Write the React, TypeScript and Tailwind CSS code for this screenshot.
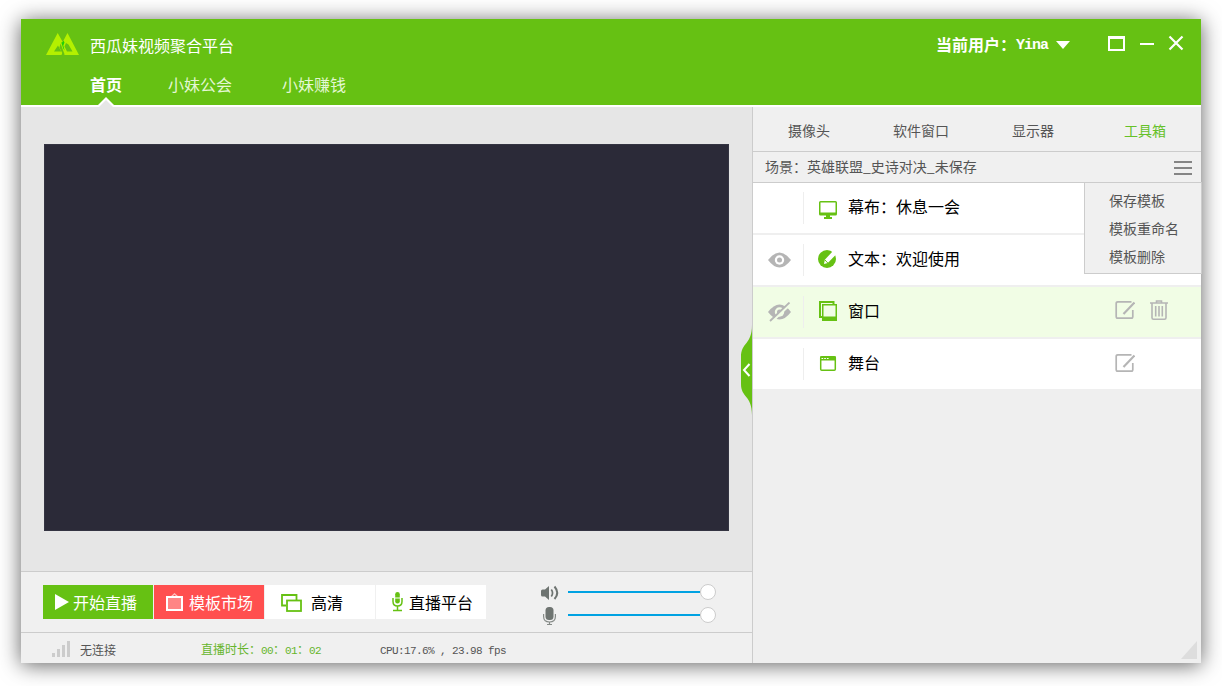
import type { ReactNode } from "react";

function Latin({ children }: { children: ReactNode }) {
  return <span className="font-['Liberation_Mono',monospace] text-[11px] tracking-[-0.6px]">{children}</span>;
}

function Logo() {
  return (
    <svg className="ml-[25px] h-[22px] w-[33px]" viewBox="0 0 33 22">
      <path d="M0 22L11.700 0L16.700 9L21.500 0L33 22H18.500L16.700 19L15.500 22ZM12 12.500L8 18.500H15.300ZM20 10L18.500 13.500L21 18.500H26.500L22.500 11.500Z" fill="#b4f000" fillRule="evenodd" />
      <path d="M14.600 10.500L18.600 21.500H17L13.500 14.500Z" fill="#66c113" />
      <path d="M15.300 9.500L16.700 9L17.500 7.500L18.500 9.500L17.300 12.500L18.600 17.500L17.300 15.500Z" fill="#1fcf0a" />
    </svg>
  );
}

function EditIcon() {
  return (
    <svg className="h-5 w-5" viewBox="0 0 20 20" fill="none" stroke="#b5b5b5">
      <path d="M16.500 1.800H2.800Q1.200 1.800 1.200 3.400V16.500Q1.200 18.200 2.800 18.200H16.200Q17.800 18.200 17.800 16.500V10" strokeWidth="1.700" />
      <path d="M8.500 14L19.500 2.500" strokeWidth="2.200" />
    </svg>
  );
}

function TrashIcon() {
  return (
    <svg className="h-[21px] w-5" viewBox="0 0 20 21" fill="none" stroke="#b5b5b5" strokeWidth="1.600">
      <path d="M0 3H18M6.500 3V1H11.500V3M2 3.500V17.800Q2 19.300 3.500 19.300H14.500Q16 19.300 16 17.800V3.500M5.700 6V16.500M9 6V16.500M12.300 6V16.500" />
    </svg>
  );
}

function EyeIcon({ hidden }: { hidden?: boolean }) {
  return (
    <svg className="h-5 w-6" viewBox="0 0 24 20">
      <path d="M0 10Q11.500-5 23 10Q11.500 25 0 10Z" fill="#b5b5b5" />
      <circle cx="11.500" cy="10" r="4.700" fill={hidden ? "#f1fde5" : "#fff"} />
      <circle cx="11.500" cy="10" r="2.500" fill="#b5b5b5" />
      {hidden && (
        <>
          <path d="M3.500 20L23.500 1" stroke="#f1fde5" strokeWidth="2.500" />
          <path d="M2 19L21.500 .5" stroke="#b5b5b5" strokeWidth="1.800" />
        </>
      )}
    </svg>
  );
}

function MonitorIcon() {
  return (
    <svg className="h-[22px] w-5" viewBox="0 0 20 22">
      <path d="M2.500 4H17.500Q19 4 19 5.500V17Q19 18.500 17.500 18.500H12V20H14V22H6V20H8V18.500H2.500Q1 18.500 1 17V5.500Q1 4 2.500 4ZM2.500 5.500V15.500H17.500V5.500Z" fill="#66c113" fillRule="evenodd" />
    </svg>
  );
}

function PenIcon() {
  return (
    <svg className="h-[22px] w-5" viewBox="0 0 20 22">
      <circle cx="9" cy="10" r="9" fill="#66c113" />
      <path d="M15 2L18.300 5.300L9.800 14L6 15L6.800 10.800Z" fill="#fff" />
      <path d="M6.800 10.800L9.800 14" stroke="#66c113" strokeWidth="1" />
    </svg>
  );
}

function WindowsIcon() {
  return (
    <svg className="h-[22px] w-5" viewBox="0 0 20 22">
      <path d="M15.500 3V1H2V16H4" fill="none" stroke="#66c113" strokeWidth="2" />
      <path d="M4 3H19V20H4ZM5.500 4.500V15.500H17.500V4.500Z" fill="#66c113" fillRule="evenodd" />
    </svg>
  );
}

function StageIcon() {
  return (
    <svg className="h-[22px] w-5" viewBox="0 0 20 22">
      <rect x="2.700" y="3.700" width="14.600" height="13.500" rx="1" fill="#fff" stroke="#66c113" strokeWidth="1.500" />
      <path d="M2 3.500H18V7.500H2Z" fill="#66c113" />
      <path d="M3.500 5.500H5.200M6.200 5.500H7.900M8.900 5.500H10.600" stroke="#fff" strokeWidth="1" />
    </svg>
  );
}

interface RowProps {
  icon: ReactNode;
  label: string;
  eye?: ReactNode;
  actions?: ReactNode;
  active?: boolean;
}

function SceneRow({ icon, label, eye, actions, active }: RowProps) {
  return (
    <div className={active ? "flex h-[50px] items-center bg-[#f1fde5]" : "flex h-[50px] items-center bg-white"}>
      <div className="flex h-8 w-[51px] items-center border-r border-[#eee] pl-[15px]">{eye}</div>
      <div className="ml-3.5">{icon}</div>
      <div className="ml-2.5 pb-[5px] text-base leading-6 text-black">{label}</div>
      <div className="ml-auto flex w-[86px] gap-[15px] pb-1">{actions}</div>
    </div>
  );
}

function VolumeSlider({ icon }: { icon: ReactNode }) {
  return (
    <div className="flex h-[23px] items-center">
      <div className="flex w-7 justify-start">{icon}</div>
      <div className="h-0.5 w-[132px] bg-[#00a2e2]" />
      <div className="h-4 w-4 rounded-full border border-[#ccc] bg-white" />
    </div>
  );
}

const tabs = ["摄像头", "软件窗口", "显示器", "工具箱"];

export default function App() {
  return (
    <div className="h-[686px] w-[1222px] overflow-hidden bg-white pl-[21px] pt-[19px] font-['Noto_Sans_CJK_SC',sans-serif]">
      <div className="flex h-[644px] w-[1180px] flex-col bg-[#f0f0f0] shadow-[0_2px_20px_rgba(0,0,0,0.62)]">
        <header className="relative h-[88px] border-b-2 border-white bg-[#66c113] text-white">
          <div className="flex h-[50px] items-center">
            <Logo />
            <div className="ml-[11px] pt-px text-base leading-6">西瓜妹视频聚合平台</div>
            <div className="ml-auto flex items-center text-base font-bold leading-6">
              <span className="pb-px">当前用户：</span>
              <span className="mt-[3px] font-['Liberation_Mono',monospace] text-[15px] tracking-[-1px]">Yina</span>
              <svg className="ml-2 mt-px h-2 w-3.5" viewBox="0 0 14 8"><path d="M0 0H14L7 8Z" fill="#fff" /></svg>
            </div>
            <svg className="mb-0.5 ml-[38px] mr-4 h-4 w-[77px]" viewBox="0 0 77 16" fill="none" stroke="#fff">
              <path d="M1 2.500V15H16V2.500" strokeWidth="2" />
              <path d="M0 2.500H17" strokeWidth="3" />
              <path d="M32 9H46" strokeWidth="2" />
              <path d="M61.500 1.500L74.500 14.500M74.500 1.500L61.500 14.500" strokeWidth="2.200" />
            </svg>
          </div>
          <nav className="flex pl-[69px] pt-[3px] text-base leading-6">
            <span className="w-[78px] font-bold">首页</span>
            <span className="w-[114px] text-[#e4f7d3]">小妹公会</span>
            <span className="text-[#e4f7d3]">小妹赚钱</span>
          </nav>
          <svg className="absolute -bottom-0.5 left-[75px] h-2.5 w-5" viewBox="0 0 20 10">
            <path d="M0 10L2 8L10 0L18 8L20 10Z" fill="#fff" />
            <path d="M3 10L10 3L17 10Z" fill="#e6e6e6" />
          </svg>
        </header>

        <div className="flex flex-1">
          <main className="relative flex w-[732px] flex-col border-r border-[#ccc]">
            <div className="h-[465px] border-b border-[#ccc] bg-[#e6e6e6] pl-[23px] pt-[37px]">
              <div className="h-[387px] w-[685px] border border-[#343442] bg-[#2b2a38]" />
            </div>
            <div className="flex h-[61px] border-b border-[#ccc] pl-[22px] pt-[13px]">
              <div className="flex gap-px text-base leading-[34px] text-black">
                <div className="flex h-[34px] w-[110px] items-center bg-[#66c113] pl-3 text-white">
                  <svg className="h-4 w-3.5" viewBox="0 0 14 16"><path d="M0 0L14 8L0 16Z" fill="#fff" /></svg>
                  <span className="ml-1">开始直播</span>
                </div>
                <div className="flex h-[34px] w-[110px] items-center bg-[#ff4f4f] pl-3 text-white">
                  <svg className="h-[18px] w-[17px]" viewBox="0 0 17 18">
                    <path d="M5 4L8.500 .8L12 4" fill="none" stroke="#ffc0c0" strokeWidth="1.200" />
                    <rect x="1" y="4" width="15" height="13" fill="#ff8585" stroke="#fff" strokeWidth="2" />
                  </svg>
                  <span className="ml-1.5">模板市场</span>
                </div>
                <div className="flex h-[34px] w-[110px] items-center bg-white pl-4">
                  <svg className="mt-0.5 h-[18px] w-[21px]" viewBox="0 0 21 18" fill="none" stroke="#66c113" strokeWidth="1.800">
                    <path d="M5 11.500H1V1H15.500V6" />
                    <rect x="6" y="6.500" width="14" height="10.500" />
                  </svg>
                  <span className="ml-[9px]">高清</span>
                </div>
                <div className="flex h-[34px] w-[110px] items-center bg-white pl-4">
                  <svg className="h-5 w-[11px]" viewBox="0 0 11 20" fill="none" stroke="#66c113">
                    <rect x="3.200" y="0" width="4.600" height="11.500" rx="2.300" fill="#66c113" stroke="none" />
                    <path d="M3 6H8" stroke="#fff" strokeWidth="1" />
                    <path d="M1 6V9.500Q1 14 5.500 14Q10 14 10 9.500V6M5.500 14V18M1 18.500H10" strokeWidth="1.500" />
                  </svg>
                  <span className="ml-1.5">直播平台</span>
                </div>
              </div>
              <div className="-mt-[5px] ml-[54px] flex flex-col">
                <VolumeSlider
                  icon={
                    <svg className="ml-px mt-0.5 h-4 w-[18px]" viewBox="0 0 18 16" fill="none" stroke="#6e7471">
                      <path d="M0 6Q0 4.500 1.500 4.500H4L8 1V15L4 11.500H1.500Q0 11.500 0 10Z" fill="#6e7471" stroke="none" />
                      <path d="M10.300 4.500Q12.800 8 10.300 11.500" strokeWidth="1.700" />
                      <path d="M13.500 1.500Q19 8 13.500 14" strokeWidth="2" />
                    </svg>
                  }
                />
                <VolumeSlider
                  icon={
                    <svg className="ml-[3px] mt-1 h-[19px] w-[13px]" viewBox="0 0 13 19" fill="none" stroke="#858a87">
                      <rect x="2.500" y="0" width="8" height="13" rx="3.500" fill="#6e7471" stroke="none" />
                      <path d="M.6 7V9.500Q.6 15 6.500 15Q12.400 15 12.400 9.500V7M6.500 15V17.500M4 17.500H9" strokeWidth="1.200" />
                    </svg>
                  }
                />
              </div>
            </div>
            <footer className="flex h-[30px] items-center pl-[31px] text-xs text-[#555]">
              <svg className="mt-px h-4 w-[18px]" viewBox="0 0 18 16" fill="#ccc">
                <path d="M0 12H3V16H0ZM5 8H8V16H5ZM10 4H13V16H10ZM15 0H18V16H15Z" />
              </svg>
              <span className="ml-2.5 w-[121px] pt-[3px]">无连接</span>
              <span className="w-[179px] pt-[3px] text-[#66b52b]">
                直播时长：<Latin>00</Latin>：<Latin>01</Latin>：<Latin>02</Latin>
              </span>
              <span className="whitespace-nowrap pt-[3px]"><Latin>CPU:17.6% , 23.98 fps</Latin></span>
            </footer>
            <svg className="absolute left-[720px] top-[218px] h-[90px] w-[11px]" viewBox="0 0 11 90">
              <path d="M11 0C11 20 0 17 0 32V59C0 73 11 70 11 90Z" fill="#66c113" />
              <path d="M8.500 39L3 45L8.500 51" fill="none" stroke="#fff" strokeWidth="2" />
            </svg>
          </main>

          <aside className="relative flex w-[448px] flex-col bg-[#efefef]">
            <div className="grid h-[45px] grid-cols-4 items-center border-b border-[#ccc] bg-[#f0f0f0] pt-0.5 text-center text-sm text-[#555]">
              {tabs.map((tab) => (
                <span key={tab} className={tab === "工具箱" ? "text-[#66c129]" : ""}>{tab}</span>
              ))}
            </div>
            <div className="flex h-[31px] items-center justify-between border-b border-[#ccc] bg-[#f0f0f0] pl-3 pr-[9px] text-sm text-[#555]">
              <span className="pb-0.5">场景：英雄联盟_史诗对决_未保存</span>
              <svg className="mt-0.5 h-3.5 w-[18px]" viewBox="0 0 18 14"><path d="M0 1H18M0 7H18M0 13H18" stroke="#858585" strokeWidth="2" /></svg>
            </div>
            <div className="flex flex-col gap-0.5">
              <SceneRow icon={<MonitorIcon />} label="幕布：休息一会" />
              <SceneRow icon={<PenIcon />} label="文本：欢迎使用" eye={<EyeIcon />} />
              <SceneRow icon={<WindowsIcon />} label="窗口" eye={<EyeIcon hidden />} actions={<><EditIcon /><TrashIcon /></>} active />
              <SceneRow icon={<StageIcon />} label="舞台" actions={<div className="pt-0.5"><EditIcon /></div>} />
            </div>
            <div className="absolute left-[331px] top-[75px] flex h-[92px] w-[118px] flex-col border border-[#ccc] bg-[#f0f0f0] pl-6 pt-[3px] text-sm leading-7 text-[#555]">
              <span>保存模板</span>
              <span>模板重命名</span>
              <span>模板删除</span>
            </div>
            <svg className="ml-auto mr-1 mt-auto mb-1 h-[18px] w-4" viewBox="0 0 16 18"><path d="M0 18L16 0V18Z" fill="#ddd" /></svg>
          </aside>
        </div>
      </div>
    </div>
  );
}
